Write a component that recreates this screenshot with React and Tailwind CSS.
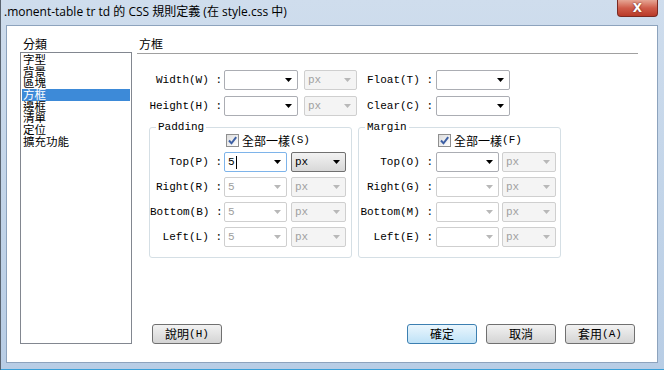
import React from 'react';

const MONO = "font-['Liberation_Mono','DejaVu_Sans_Mono',monospace]";
const CJK = "font-['Noto_Sans_CJK_TC','Noto_Sans',sans-serif]";

function Arrow({ dim }) {
  return (
    <svg width="7" height="4" viewBox="0 0 7 4" className="shrink-0">
      <path d="M0 0H7L3.5 4Z" fill={dim ? '#b8b8b8' : '#000'} />
    </svg>
  );
}

function Combo({ w, value, state = 'normal', cursor }) {
  const box = {
    normal: 'bg-white border-[#abadb3]',
    focus: 'bg-white border-[#7eb4ea]',
    disabled: 'bg-white border-[#cfcfcf]',
    disabledGray: 'bg-[#f4f4f4] border-[#cfcfcf]',
    button: 'bg-linear-to-b from-[#f2f2f2] to-[#d8d8d8] border-[#707070]',
  }[state];
  const dim = state === 'disabled' || state === 'disabledGray';
  return (
    <div className={`${w} h-[20px] shrink-0 border rounded-[2px] flex items-center justify-between pl-[3px] pr-[5px] ${box}`}>
      <span className={`${MONO} text-[11px] leading-none flex items-center ${dim ? 'text-[#a0a0a0]' : 'text-black'}`}>
        {value}
        {cursor && <span className="ml-[1px] w-[1px] h-[13px] bg-black" />}
      </span>
      <Arrow dim={dim} />
    </div>
  );
}

function Label({ w, children }) {
  return (
    <div className={`${w} shrink-0 text-right ${MONO} text-[11px] leading-none text-black whitespace-pre`}>
      {children}
    </div>
  );
}

function Check({ text, hot }) {
  return (
    <div className="flex items-center h-[13px]">
      <div className="w-[13px] h-[13px] border border-[#8f8f8f] bg-linear-to-br from-[#dcdcdc] to-[#ffffff] flex items-center justify-center">
        <svg width="11" height="11" viewBox="0 0 11 11">
          <path d="M2 5.5L4.5 8.3L9.2 2.2" fill="none" stroke="#3c5fa4" strokeWidth="2" />
        </svg>
      </div>
      <span className={`ml-[3px] ${CJK} text-[12px] leading-none text-black`}>{text}</span>
      <span className={`${MONO} text-[11px] leading-none text-black`}>({hot})</span>
    </div>
  );
}

function Btn({ children, hot, focus }) {
  return (
    <div
      className={`w-[70px] h-[20px] rounded-[3px] border flex items-center justify-center ${
        focus
          ? 'border-[#3c7fb1] bg-linear-to-b from-[#eaf6fd] to-[#bfe2f7]'
          : 'border-[#707070] bg-linear-to-b from-[#f2f2f2] to-[#d4d4d4]'
      }`}
    >
      <span className={`${CJK} text-[12px] leading-none text-black`}>{children}</span>
      {hot && <span className={`${MONO} text-[11px] leading-none text-black`}>({hot})</span>}
    </div>
  );
}

function Group({ title, checkText, hot, checkPad, labelW, inW, pxW, inGap, pxGap, rows, className }) {
  return (
    <fieldset className={`${className} h-[137px] border border-[#d5dfe5] rounded-[3px] px-0 pb-0`}>
      <legend className={`ml-[6px] px-[2px] ${MONO} text-[11px] leading-[12px] text-black`}>{title}</legend>
      <div className={`mt-[1px] ${checkPad}`}>
        <Check text={checkText} hot={hot} />
      </div>
      <div className="mt-[5px] flex flex-col gap-[5px]">
        {rows.map((r) => (
          <div key={r.label} className="flex items-center h-[20px]">
            <Label w={labelW}>{r.label}</Label>
            <div className={inGap}>
              <Combo w={inW} value={r.value} state={r.state} cursor={r.cursor} />
            </div>
            <div className={pxGap}>
              <Combo w={pxW} value="px" state={r.pxState} />
            </div>
          </div>
        ))}
      </div>
    </fieldset>
  );
}

export default function App() {
  const cats = ['字型', '背景', '區塊', '方框', '邊框', '清單', '定位', '擴充功能'];

  return (
    <div className="w-[664px] h-[370px] overflow-hidden flex flex-col bg-linear-to-b from-[#cfdded] via-[#c3d5e9] to-[#b8cde5] border-l border-[#5a6470]">
      {/* title bar */}
      <div className="h-[25px] shrink-0 flex justify-between pl-[3px] pr-[6px]">
        <div className={`pt-[5px] font-['Open_Sans','Noto_Sans_CJK_TC',sans-serif] text-[12px] leading-[14px] text-black whitespace-pre`}>
          .monent-table tr td 的 CSS 規則定義 (在 style.css 中)
        </div>
        <div className="w-[41px] h-[17px] rounded-b-[4px] border border-t-0 border-[#7a2a22] bg-linear-to-b from-[#e5a594] via-[#cf5c4a] to-[#b93a28] flex items-center justify-center">
          <span className="font-['DejaVu_Sans',sans-serif] font-bold text-[12px] leading-none text-white [text-shadow:0_0_2px_#5a1a10]">X</span>
        </div>
      </div>

      {/* body */}
      <div className="flex-1 flex pl-[5px] pr-[6px]">
        <div className="flex-1 bg-white border border-[#8da3bd] flex">
          {/* category column */}
          <div className="ml-[13px] w-[112px] flex flex-col">
            <div className={`h-[26px] pt-[11px] pl-[3px] ${CJK} text-[12px] leading-[14px] text-black`}>分類</div>
            <div className="h-[292px] border border-[#828790] pt-[1px] px-[1px]">
              {cats.map((c) => (
                <div
                  key={c}
                  className={`h-[11.7px] pl-[1px] ${CJK} text-[11.5px] leading-[11.7px] ${
                    c === '方框' ? 'bg-[#3d8ad8] text-white' : 'text-black'
                  }`}
                >
                  {c}
                </div>
              ))}
            </div>
          </div>

          {/* right panel */}
          <div className="ml-[5px] w-[501px] flex flex-col">
            <div className={`h-[28px] pt-[11px] pl-[2px] border-b border-[#a0a0a0] ${CJK} text-[12px] leading-[14px] text-black`}>方框</div>

            <div className="mt-[16px] flex items-center h-[20px]">
              <Label w="w-[85px]">Width(W) :</Label>
              <div className="ml-[2px]"><Combo w="w-[74px]" value="" /></div>
              <div className="ml-[6px]"><Combo w="w-[53px]" value="px" state="disabledGray" /></div>
              <Label w="w-[76px]">Float(T) :</Label>
              <div className="ml-[3px]"><Combo w="w-[74px]" value="" /></div>
            </div>
            <div className="mt-[6px] flex items-center h-[20px]">
              <Label w="w-[85px]">Height(H) :</Label>
              <div className="ml-[2px]"><Combo w="w-[74px]" value="" /></div>
              <div className="ml-[6px]"><Combo w="w-[53px]" value="px" state="disabledGray" /></div>
              <Label w="w-[76px]">Clear(C) :</Label>
              <div className="ml-[3px]"><Combo w="w-[74px]" value="" /></div>
            </div>

            <div className="mt-[5px] flex">
              <Group
                className="ml-[12px] w-[203px]"
                title="Padding"
                checkText="全部一樣"
                hot="S"
                checkPad="pl-[76px]"
                labelW="w-[72px]"
                inW="w-[63px]"
                pxW="w-[55px]"
                inGap="ml-[2px]"
                pxGap="ml-[4px]"
                rows={[
                  { label: 'Top(P) :', value: '5', state: 'focus', cursor: true, pxState: 'button' },
                  { label: 'Right(R) :', value: '5', state: 'disabled', pxState: 'disabledGray' },
                  { label: 'Bottom(B) :', value: '5', state: 'disabled', pxState: 'disabledGray' },
                  { label: 'Left(L) :', value: '5', state: 'disabled', pxState: 'disabledGray' },
                ]}
              />
              <Group
                className="ml-[6px] w-[203px]"
                title="Margin"
                checkText="全部一樣"
                hot="F"
                checkPad="pl-[79px]"
                labelW="w-[74px]"
                inW="w-[63px]"
                pxW="w-[54px]"
                inGap="ml-[3px]"
                pxGap="ml-[3px]"
                rows={[
                  { label: 'Top(O) :', value: '', state: 'normal', pxState: 'disabledGray' },
                  { label: 'Right(G) :', value: '', state: 'disabled', pxState: 'disabledGray' },
                  { label: 'Bottom(M) :', value: '', state: 'disabled', pxState: 'disabledGray' },
                  { label: 'Left(E) :', value: '', state: 'disabled', pxState: 'disabledGray' },
                ]}
              />
            </div>

            <div className="mt-[66px] pl-[15px] pr-[3px] flex gap-[9px]">
              <Btn hot="H">說明</Btn>
              <div className="flex-1" />
              <Btn focus>確定</Btn>
              <Btn>取消</Btn>
              <Btn hot="A">套用</Btn>
            </div>
          </div>
        </div>
      </div>
      <div className="h-[7px] shrink-0 border-b border-[#3aa0d8]" />
    </div>
  );
}
